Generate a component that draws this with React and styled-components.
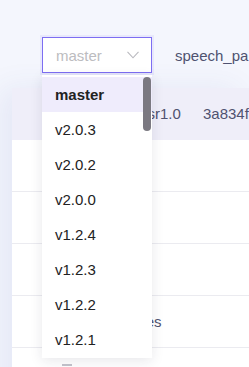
import React from "react";
import styled, { createGlobalStyle } from "styled-components";

const GlobalStyle = createGlobalStyle`
  html, body {
    margin: 0;
    padding: 0;
    background: #f4f6fd;
    font-family: "Liberation Sans", Arial, sans-serif;
    overflow: hidden;
  }
`;

const versions = ["master", "v2.0.3", "v2.0.2", "v2.0.0", "v1.2.4", "v1.2.3", "v1.2.2", "v1.2.1"];

const rows = [
  { name: "deepspeech_asr1.0", hash: "3a834f2c9e1b", active: true },
  { name: "", hash: "" },
  { name: "", hash: "" },
  { name: "", hash: "" },
  { name: "Release updates", hash: "" },
  { name: "", hash: "", icon: true },
];

export default function App() {
  return (
    <>
      <GlobalStyle />
      <Page>
        <Toolbar>
          <SelectWrap>
            <Select>
              <Placeholder>master</Placeholder>
              <svg width="12" height="8" viewBox="0 0 12 8">
                <polyline points="0.5,0.8 6,6.8 11.5,0.8" fill="none" stroke="#b9b9bf" strokeWidth="1.1" />
              </svg>
            </Select>
            <Menu>
              {versions.map((v, i) => (
                <Option key={v} selected={i === 0}>
                  {v}
                </Option>
              ))}
              <Thumb />
            </Menu>
          </SelectWrap>
          <Label>speech_pa</Label>
        </Toolbar>
        <Table>
          {rows.map((r, i) => (
            <Row key={i} active={r.active}>
              <NameCell>{r.name}</NameCell>
              <HashCell>{r.hash}</HashCell>
              {r.icon && <Mark />}
            </Row>
          ))}
        </Table>
      </Page>
    </>
  );
}

const Page = styled.div`
  width: 249px;
  height: 367px;
  overflow: hidden;
`;

const Toolbar = styled.div`
  display: flex;
  align-items: center;
  gap: 23px;
  padding: 37px 0 15px 42px;
`;

const SelectWrap = styled.div`
  position: relative;
  z-index: 2;
`;

const Select = styled.div`
  box-sizing: border-box;
  width: 110px;
  height: 36px;
  display: flex;
  align-items: center;
  justify-content: space-between;
  padding: 0 12px 0 13px;
  background: #fff;
  border: 1px solid #7d6ef2;
  box-shadow: 0 0 0 2px rgba(125, 110, 242, 0.1);
`;

const Placeholder = styled.span`
  font-size: 15px;
  color: #bcbcc0;
`;

const Label = styled.span`
  font-size: 15px;
  color: #4f5270;
  white-space: nowrap;
`;

const Menu = styled.div`
  position: absolute;
  top: 38px;
  left: 0;
  width: 110px;
  padding: 2px 0 1px;
  background: #fff;
  box-shadow: 0 3px 12px rgba(30, 30, 60, 0.1);
`;

const Option = styled.div`
  height: 35px;
  display: flex;
  align-items: center;
  padding-left: 13px;
  font-size: 15px;
  color: #222;
  font-weight: ${(p) => (p.selected ? 700 : 400)};
  background: ${(p) => (p.selected ? "#efecfc" : "#fff")};
`;

const Thumb = styled.div`
  position: absolute;
  top: 2px;
  right: 1px;
  width: 8px;
  height: 54px;
  border-radius: 4px;
  background: #7b7981;
`;

const Table = styled.div`
  margin-left: 12px;
  background: #fff;
  box-shadow: -12px 0 28px rgba(60, 80, 160, 0.08);
`;

const Row = styled.div`
  position: relative;
  box-sizing: border-box;
  height: 52px;
  display: flex;
  align-items: center;
  font-size: 15px;
  color: #4f5270;
  white-space: nowrap;
  background: ${(p) => (p.active ? "#efeef9" : "#fff")};
  border-bottom: 1px solid ${(p) => (p.active ? "#efeef9" : "#ebebf0")};
`;

const NameCell = styled.div`
  width: 191px;
  flex: none;
  padding-left: 37px;
  box-sizing: border-box;
`;

const HashCell = styled.div`
  overflow: hidden;
`;

const Mark = styled.div`
  position: absolute;
  left: 50px;
  top: 16px;
  width: 10px;
  height: 2px;
  background: #c4c4cc;
`;
